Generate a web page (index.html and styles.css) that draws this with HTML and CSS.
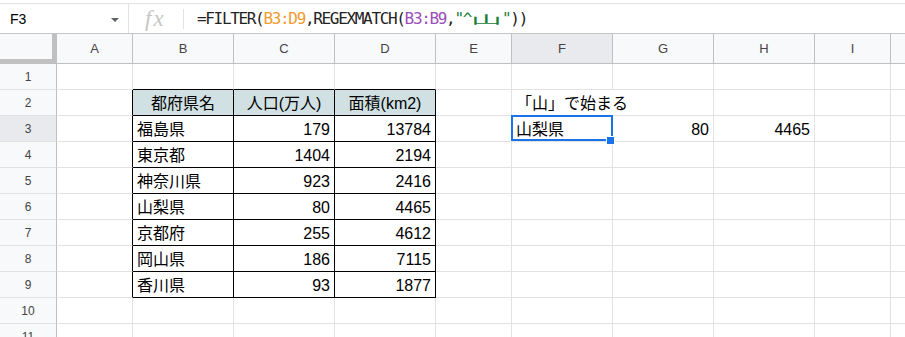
FILE: index.html
```html
<!DOCTYPE html>
<html lang="ja">

<head>
  <meta charset="UTF-8">
  <title>FILTER REGEXMATCH</title>
  <link rel="stylesheet" href="styles.css">
</head>

<body>
  <div class="formula-bar">
    <div class="name-box">
      <span class="name">F3</span>
      <span class="caret"></span>
    </div>
    <div class="fx">fx</div>
    <div class="sep"></div>
    <div class="formula">=FILTER(<span class="rng1">B3:D9</span>,REGEXMATCH(<span class="rng2">B3:B9</span>,<span class="str">"^<span class="yama">山</span>"</span>))</div>
  </div>

  <div class="sheet">
    <!-- column headers -->
    <div class="corner"></div>
    <div class="h">A</div>
    <div class="h">B</div>
    <div class="h">C</div>
    <div class="h">D</div>
    <div class="h">E</div>
    <div class="h sel">F</div>
    <div class="h">G</div>
    <div class="h">H</div>
    <div class="h">I</div>
    <div class="h"></div>

    <!-- row 1 -->
    <div class="r">1</div>
    <div class="c"></div>
    <div class="c bt"></div>
    <div class="c bt"></div>
    <div class="c bt"></div>
    <div class="c"></div>
    <div class="c"></div>
    <div class="c"></div>
    <div class="c"></div>
    <div class="c"></div>
    <div class="c"></div>

    <!-- row 2 -->
    <div class="r">2</div>
    <div class="c bl"></div>
    <div class="c bx th">都府県名</div>
    <div class="c bx th">人口(万人)</div>
    <div class="c bx th">面積(km2)</div>
    <div class="c"></div>
    <div class="c ov">「山」で始まる</div>
    <div class="c"></div>
    <div class="c"></div>
    <div class="c"></div>
    <div class="c"></div>

    <!-- row 3 -->
    <div class="r sel">3</div>
    <div class="c bl"></div>
    <div class="c bx">福島県</div>
    <div class="c bx num">179</div>
    <div class="c bx num">13784</div>
    <div class="c"></div>
    <div class="c cur">山梨県</div>
    <div class="c num">80</div>
    <div class="c num">4465</div>
    <div class="c"></div>
    <div class="c"></div>

    <!-- row 4 -->
    <div class="r">4</div>
    <div class="c bl"></div>
    <div class="c bx">東京都</div>
    <div class="c bx num">1404</div>
    <div class="c bx num">2194</div>
    <div class="c"></div>
    <div class="c"></div>
    <div class="c"></div>
    <div class="c"></div>
    <div class="c"></div>
    <div class="c"></div>

    <!-- row 5 -->
    <div class="r">5</div>
    <div class="c bl"></div>
    <div class="c bx">神奈川県</div>
    <div class="c bx num">923</div>
    <div class="c bx num">2416</div>
    <div class="c"></div>
    <div class="c"></div>
    <div class="c"></div>
    <div class="c"></div>
    <div class="c"></div>
    <div class="c"></div>

    <!-- row 6 -->
    <div class="r">6</div>
    <div class="c bl"></div>
    <div class="c bx">山梨県</div>
    <div class="c bx num">80</div>
    <div class="c bx num">4465</div>
    <div class="c"></div>
    <div class="c"></div>
    <div class="c"></div>
    <div class="c"></div>
    <div class="c"></div>
    <div class="c"></div>

    <!-- row 7 -->
    <div class="r">7</div>
    <div class="c bl"></div>
    <div class="c bx">京都府</div>
    <div class="c bx num">255</div>
    <div class="c bx num">4612</div>
    <div class="c"></div>
    <div class="c"></div>
    <div class="c"></div>
    <div class="c"></div>
    <div class="c"></div>
    <div class="c"></div>

    <!-- row 8 -->
    <div class="r">8</div>
    <div class="c bl"></div>
    <div class="c bx">岡山県</div>
    <div class="c bx num">186</div>
    <div class="c bx num">7115</div>
    <div class="c"></div>
    <div class="c"></div>
    <div class="c"></div>
    <div class="c"></div>
    <div class="c"></div>
    <div class="c"></div>

    <!-- row 9 -->
    <div class="r">9</div>
    <div class="c bl"></div>
    <div class="c bx">香川県</div>
    <div class="c bx num">93</div>
    <div class="c bx num">1877</div>
    <div class="c"></div>
    <div class="c"></div>
    <div class="c"></div>
    <div class="c"></div>
    <div class="c"></div>
    <div class="c"></div>

    <!-- row 10 -->
    <div class="r">10</div>
    <div class="c"></div>
    <div class="c"></div>
    <div class="c"></div>
    <div class="c"></div>
    <div class="c"></div>
    <div class="c"></div>
    <div class="c"></div>
    <div class="c"></div>
    <div class="c"></div>
    <div class="c"></div>

    <!-- row 11 -->
    <div class="r">11</div>
    <div class="c"></div>
    <div class="c"></div>
    <div class="c"></div>
    <div class="c"></div>
    <div class="c"></div>
    <div class="c"></div>
    <div class="c"></div>
    <div class="c"></div>
    <div class="c"></div>
    <div class="c"></div>
  </div>
</body>

</html>
```

FILE: styles.css
```css
body {
  margin: 0;
  padding: 0;
  width: 905px;
  height: 337px;
  overflow: hidden;
  background: #fff;
  font-family: "Liberation Sans", "Noto Sans CJK JP", sans-serif;
  color: #000;
}

/* formula bar */
.formula-bar {
  display: flex;
  align-items: center;
  height: 29px;
  margin-top: 3px;
  border-top: 1px solid #e1e3e1;
  border-bottom: 1px solid #c4c7c5;
}

.name-box {
  box-sizing: border-box;
  width: 129px;
  height: 100%;
  display: flex;
  align-items: center;
  justify-content: space-between;
  padding: 0 9px 0 10px;
  border-right: 1px solid #e1e3e1;
}

.name {
  font-size: 14px;
  color: #000;
}

.caret {
  width: 0;
  height: 0;
  border-left: 4px solid transparent;
  border-right: 4px solid transparent;
  border-top: 4px solid #5f6368;
  margin-top: 2px;
}

.fx {
  box-sizing: border-box;
  width: 54px;
  padding-left: 16px;
  font-family: "Liberation Serif", serif;
  font-style: italic;
  font-size: 23px;
  letter-spacing: 2px;
  color: #c6c6c6;
  line-height: 29px;
}

.sep {
  width: 1px;
  height: 20px;
  background: #e1e3e1;
}

.formula {
  padding-left: 13px;
  font-family: "DejaVu Sans Mono", monospace;
  font-size: 16px;
  letter-spacing: -1.33px;
  color: #222;
  white-space: nowrap;
}

.rng1 {
  color: #f39b2f;
}

.rng2 {
  color: #9b4fb8;
}

.str {
  color: #188038;
}

.yama {
  display: inline-block;
  width: 31px;
  text-align: center;
  font-family: "Noto Sans CJK JP", sans-serif;
  font-size: 14px;
  letter-spacing: 0;
  transform: scale(2.2, 0.78);
  vertical-align: -1px;
}

/* grid */
.sheet {
  display: grid;
  grid-template-columns: 57px 76px 101px 101px 101px 76px 101px 101px 101px 76px 101px;
  grid-template-rows: 30px repeat(11, 26px);
}

.corner {
  box-sizing: border-box;
  background: #f8f9fa;
  border-right: 5px solid #c0c0c0;
  border-bottom: 5px solid #c0c0c0;
}

.h {
  box-sizing: border-box;
  display: flex;
  align-items: center;
  justify-content: center;
  background: #f8f9fa;
  border-right: 1px solid #c0c0c0;
  border-bottom: 1px solid #c0c0c0;
  font-size: 13px;
  color: #444;
}

.r {
  box-sizing: border-box;
  display: flex;
  align-items: center;
  justify-content: center;
  background: #f8f9fa;
  border-right: 1px solid #c0c0c0;
  border-bottom: 1px solid #e1e1e1;
  font-size: 12px;
  color: #444;
}

.h.sel,
.r.sel {
  background: #e8eaed;
}

.c {
  box-sizing: border-box;
  display: flex;
  align-items: flex-end;
  padding: 0 4px 1px 4px;
  border-right: 1px solid #e2e2e2;
  border-bottom: 1px solid #e2e2e2;
  font-size: 16px;
  line-height: 20px;
  white-space: nowrap;
}

.num {
  justify-content: flex-end;
  padding-right: 4px;
}

.bl {
  border-right-color: #000;
}

.bt {
  border-bottom-color: #000;
}

.bx {
  border-right-color: #000;
  border-bottom-color: #000;
}

.th {
  background: #d0e0e3;
  justify-content: center;
}

.ov {
  border-right-color: transparent;
}

.cur {
  position: relative;
}

.cur::before {
  content: "";
  position: absolute;
  top: -1px;
  left: -1px;
  right: -1px;
  bottom: 0;
  border: 2px solid #1a73e8;
}

.cur::after {
  content: "";
  position: absolute;
  right: -3px;
  bottom: -4px;
  width: 7px;
  height: 7px;
  background: #1a73e8;
  border: 1px solid #fff;
}
```
